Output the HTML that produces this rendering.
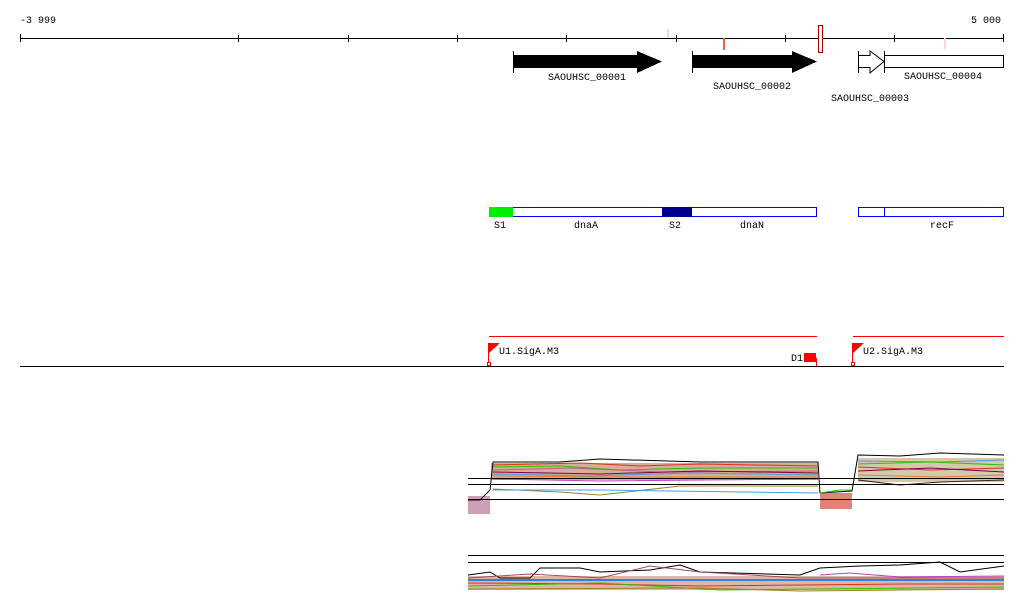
<!DOCTYPE html>
<html><head><meta charset="utf-8"><style>
html,body{margin:0;padding:0;background:#fff;width:1024px;height:611px;overflow:hidden}
svg{display:block}
text{font-family:"Liberation Mono","DejaVu Sans Mono",monospace;font-size:10px;fill:#000}
</style></head><body>
<svg width="1024" height="611" viewBox="0 0 1024 611" shape-rendering="crispEdges">
<text x="20" y="23">-3 999</text>
<text x="971" y="23">5 000</text>
<line x1="20" y1="38.5" x2="1004" y2="38.5" stroke="#000"/>
<g stroke="#000">
<line x1="20.5" y1="34" x2="20.5" y2="42"/><line x1="238.5" y1="35" x2="238.5" y2="42"/>
<line x1="348.5" y1="35" x2="348.5" y2="42"/><line x1="457.5" y1="35" x2="457.5" y2="42"/>
<line x1="566.5" y1="35" x2="566.5" y2="42"/><line x1="676.5" y1="35" x2="676.5" y2="42"/>
<line x1="785.5" y1="35" x2="785.5" y2="42"/><line x1="894.5" y1="35" x2="894.5" y2="42"/>
<line x1="1003.5" y1="34" x2="1003.5" y2="42"/>
</g>
<rect x="667" y="29" width="2" height="9" fill="#f8d8c8"/>
<rect x="723" y="38" width="2" height="12" fill="#f06040"/>
<rect x="944" y="38" width="2" height="11" fill="#f8d8c8"/>
<rect x="818.5" y="25.5" width="4" height="27" fill="#fff" stroke="#b00000"/>
<line x1="513.5" y1="51" x2="513.5" y2="73" stroke="#000"/>
<polygon points="513,55 637,55 637,51 662,61.5 637,73 637,68 513,68" fill="#000"/>
<line x1="692.5" y1="51" x2="692.5" y2="73" stroke="#000"/>
<polygon points="692,55 792,55 792,51 817,61.5 792,73 792,68 692,68" fill="#000"/>
<line x1="858.5" y1="51" x2="858.5" y2="73" stroke="#000"/>
<polygon points="858.5,55.5 870,55.5 870,51 884,61.5 870,73 870,67.5 858.5,67.5" fill="#fff" stroke="#000" shape-rendering="auto"/>
<line x1="884.5" y1="51" x2="884.5" y2="73" stroke="#000"/>
<rect x="884.5" y="55.5" width="119" height="12" fill="#fff" stroke="#000"/>
<text x="548" y="80">SAOUHSC_00001</text>
<text x="713" y="89">SAOUHSC_00002</text>
<text x="831" y="101">SAOUHSC_00003</text>
<text x="904" y="79">SAOUHSC_00004</text>
<rect x="489.5" y="207.5" width="327" height="9" fill="#fff" stroke="#0000ff"/>
<rect x="489" y="207" width="24" height="10" fill="#00ee00"/>
<rect x="662" y="207" width="30" height="10" fill="#000090"/>
<rect x="858.5" y="207.5" width="145" height="9" fill="#fff" stroke="#0000ff"/>
<line x1="884.5" y1="207" x2="884.5" y2="217" stroke="#0000ff"/>
<text x="494" y="228">S1</text><text x="574" y="228">dnaA</text>
<text x="669" y="228">S2</text><text x="740" y="228">dnaN</text>
<text x="930" y="228">recF</text>
<line x1="489" y1="336.5" x2="817" y2="336.5" stroke="#ff0000"/>
<line x1="853" y1="336.5" x2="1004" y2="336.5" stroke="#ff0000"/>
<line x1="20" y1="366.5" x2="1004" y2="366.5" stroke="#000"/>
<line x1="488.5" y1="343" x2="488.5" y2="366" stroke="#ff0000"/>
<polygon points="489,343 500,343 489,353" fill="#ff0000"/>
<rect x="487.5" y="362.5" width="3" height="3" fill="#fff" stroke="#ff0000"/>
<text x="499" y="354">U1.SigA.M3</text>
<line x1="852.5" y1="343" x2="852.5" y2="366" stroke="#ff0000"/>
<polygon points="853,343 864,343 853,353" fill="#ff0000"/>
<rect x="851.5" y="362.5" width="3" height="3" fill="#fff" stroke="#ff0000"/>
<text x="863" y="354">U2.SigA.M3</text>
<text x="791" y="361">D1</text>
<rect x="804" y="353" width="12" height="9" fill="#ff0000"/>
<line x1="816.5" y1="358" x2="816.5" y2="366" stroke="#ff0000"/>
<!-- expression 1 -->
<rect x="491" y="463" width="327" height="17" fill="#b86a48" opacity="0.55"/>
<rect x="858" y="458" width="146" height="24" fill="#a08840" opacity="0.45"/>
<rect x="468" y="496" width="22" height="18" fill="#a04070" opacity="0.5"/>
<rect x="820" y="493" width="32" height="16" fill="#d04030" opacity="0.65"/>
<g shape-rendering="auto" fill="none" stroke-width="1">
<polyline points="468,500 480,500 490,490 493,462 560,462 600,459 700,462 818,462 820,493 852,491 858,455 900,456 940,453 1004,455" stroke="#000"/>
<polyline points="493,465 580,463 640,466 700,464 818,466" stroke="#e03020"/>
<polyline points="493,467 560,466 620,470 700,468 818,468" stroke="#30c000"/>
<polyline points="493,470 570,468 660,472 818,471" stroke="#c06080"/>
<polyline points="493,472 600,474 700,471 818,473" stroke="#800040"/>
<polyline points="493,474 590,476 690,473 818,475" stroke="#40a0e0"/>
<polyline points="493,476 600,477 818,477" stroke="#e08030"/>
<polyline points="493,479 600,481 818,479" stroke="#c040c0"/>
<polyline points="858,461 940,462 1004,460" stroke="#40a0e0"/>
<polyline points="858,464 930,462 1004,465" stroke="#30c000"/>
<polyline points="858,467 930,470 1004,468" stroke="#e03020"/>
<polyline points="858,471 930,468 1004,472" stroke="#800040"/>
<polyline points="858,475 940,477 1004,475" stroke="#e08030"/>
<polyline points="858,480 900,485 940,482 1004,480" stroke="#402020"/>
<polyline points="493,489 560,492 600,495 680,486 818,486" stroke="#a08020"/>
<polyline points="493,490 600,490 818,493" stroke="#40a0e0"/>
<polyline points="820,493 840,490 852,490" stroke="#30c000"/>
</g>
<line x1="468" y1="478.5" x2="1004" y2="478.5" stroke="#000"/>
<line x1="468" y1="484.5" x2="1004" y2="484.5" stroke="#000"/>
<line x1="468" y1="499.5" x2="1004" y2="499.5" stroke="#000"/>
<!-- expression 2 -->
<line x1="468" y1="555.5" x2="1004" y2="555.5" stroke="#000"/>
<line x1="468" y1="562.5" x2="1004" y2="562.5" stroke="#000"/>
<rect x="468" y="576" width="536" height="14" fill="#b06040" opacity="0.45"/>
<g shape-rendering="auto" fill="none">
<polyline points="468,575 490,572 500,578 530,578 540,568 580,568 600,572 650,570 680,565 700,572 800,575 820,568 860,566 900,565 940,562 960,572 1004,566" stroke="#000"/>
<polyline points="468,578 530,574 600,578 650,566 700,572 800,578 1004,578" stroke="#a05050"/>
<polyline points="468,580 1004,580" stroke="#3080e0" stroke-width="2"/>
<polyline points="468,583 600,584 700,586 800,585 900,584 1004,584" stroke="#e03020"/>
<polyline points="468,586 600,583 720,590 1004,587" stroke="#30c000"/>
<polyline points="468,589 700,588 800,591 1004,589" stroke="#a08020"/>
<polyline points="820,575 850,573 900,577 1004,576" stroke="#c040c0"/>
</g>
</svg>
</body></html>
